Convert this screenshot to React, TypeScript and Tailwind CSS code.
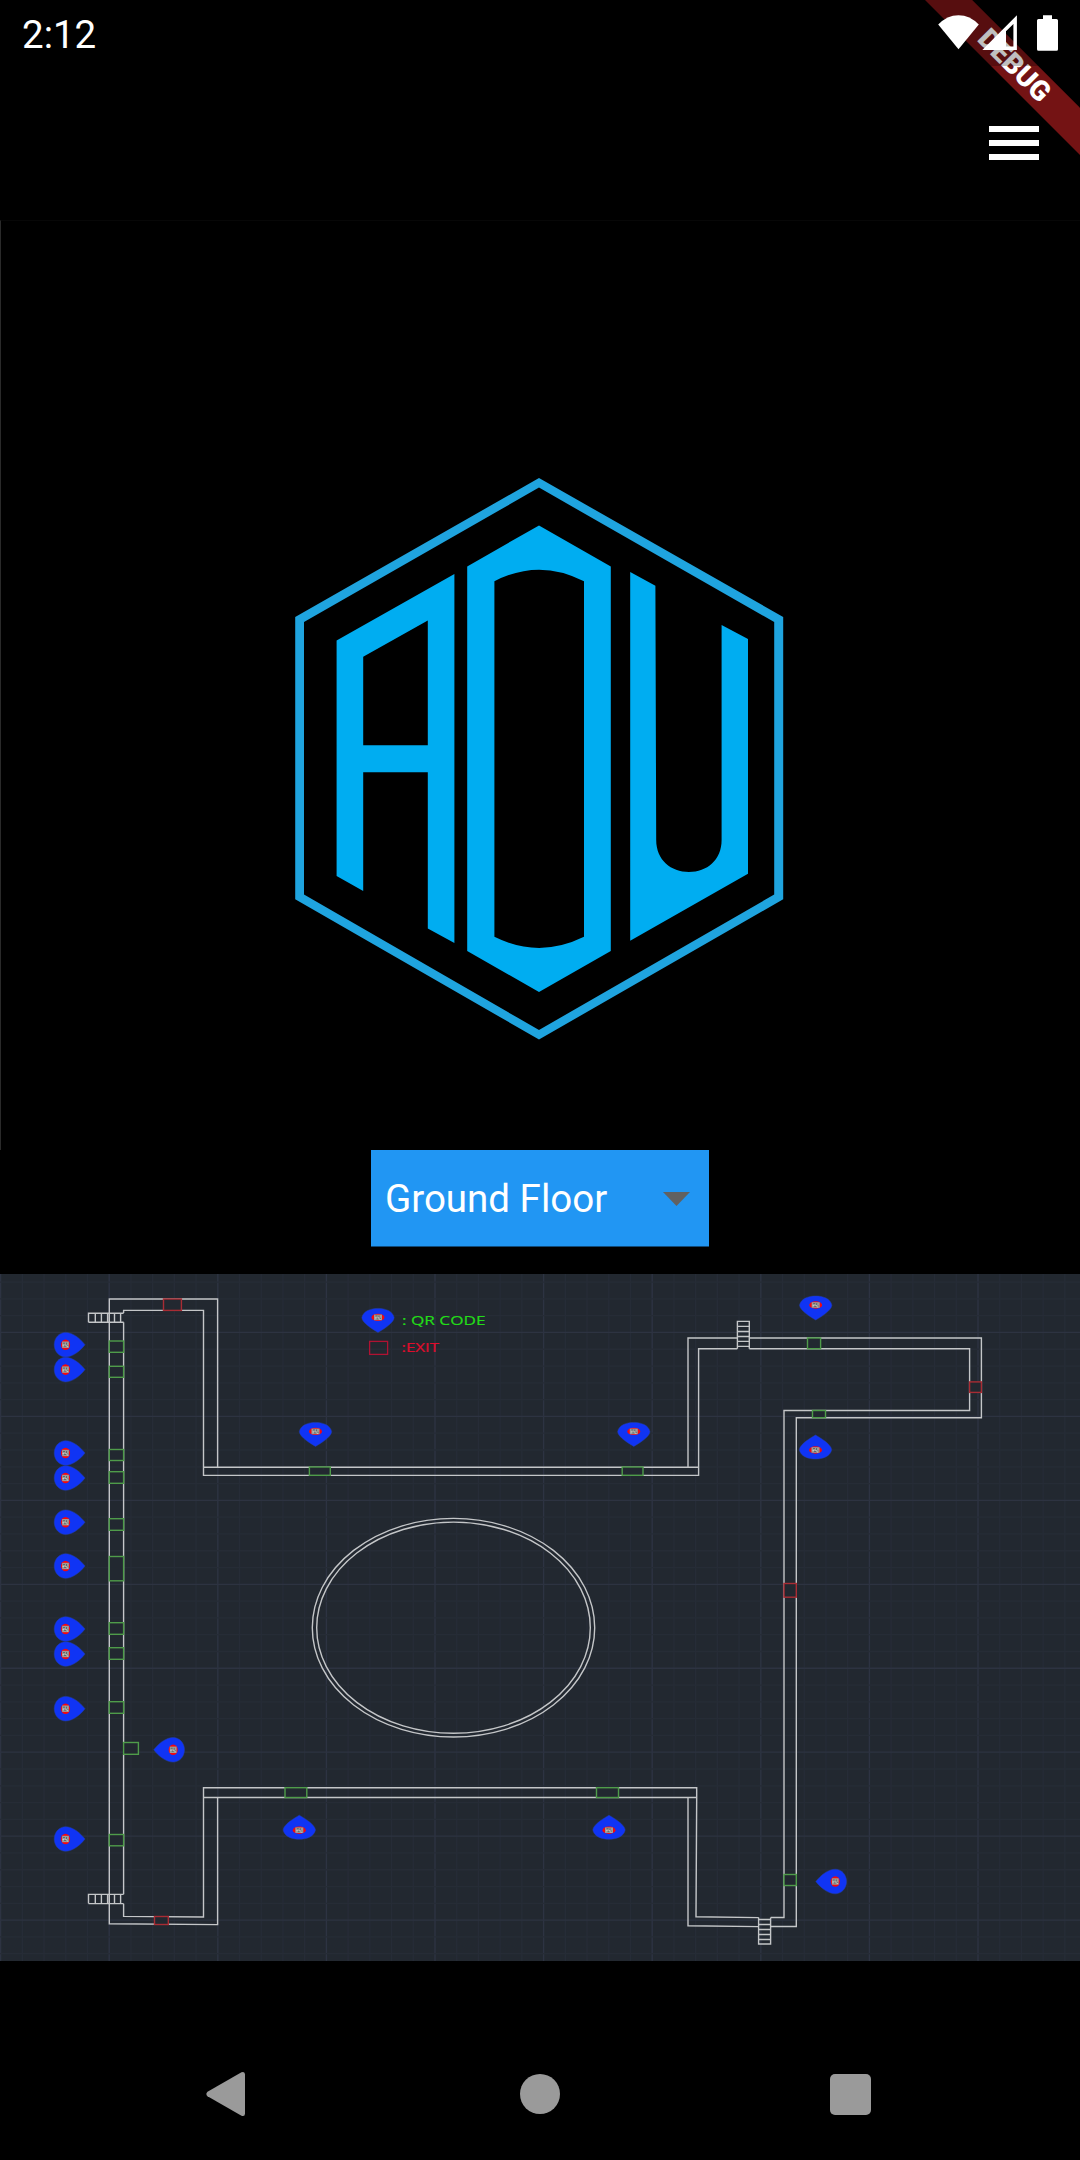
import React from "react";

type Direction = "up" | "down" | "left" | "right";
type Box = { x1: number; y1: number; x2: number; y2: number };

const LEFT = 109.3;
const INNER = 123.6;

const b = (x1: number, y1: number, x2: number, y2: number): Box => ({ x1, y1, x2, y2 });

const doors: Box[] = [
  b(LEFT, 1341, INNER, 1352.3),
  b(LEFT, 1366.3, INNER, 1377.3),
  b(LEFT, 1449.5, INNER, 1460.5),
  b(LEFT, 1471.7, INNER, 1483.3),
  b(LEFT, 1518.7, INNER, 1530.3),
  b(LEFT, 1556.5, INNER, 1580.8),
  b(LEFT, 1622.7, INNER, 1634.3),
  b(LEFT, 1647.7, INNER, 1659.3),
  b(LEFT, 1701.7, INNER, 1713.3),
  b(LEFT, 1834.5, INNER, 1845.8),
  b(INNER, 1742.5, 138.4, 1754.3),
  b(309.4, 1467, 330.3, 1475.3),
  b(622.2, 1467, 643, 1475.3),
  b(285, 1787.7, 306.8, 1797.5),
  b(596.5, 1787.7, 618.5, 1797.5),
  b(807.5, 1338, 820.6, 1348.7),
  b(812.5, 1410.5, 825.5, 1417.7),
  b(784, 1874.5, 796.3, 1885.5),
];

const exits: Box[] = [
  b(163.5, 1299, 181.4, 1310.4),
  b(154.5, 1916.5, 168.3, 1924.5),
  b(969.6, 1381.9, 981.4, 1392.4),
  b(784, 1583.5, 796.3, 1597.2),
];

const pins: { x: number; y: number; d: Direction }[] = [
  ...[1344.7, 1369.6, 1453, 1478, 1522.2, 1566, 1629, 1654, 1708.7, 1839].map((y) => ({
    x: 65.5,
    y,
    d: "right" as Direction,
  })),
  { x: 173.2, y: 1749.8, d: "left" },
  { x: 835.3, y: 1881.5, d: "left" },
  { x: 378, y: 1317.4, d: "down" },
  { x: 315.5, y: 1431.4, d: "down" },
  { x: 633.8, y: 1431.4, d: "down" },
  { x: 815.7, y: 1305, d: "down" },
  { x: 815.5, y: 1450, d: "up" },
  { x: 299.3, y: 1830.2, d: "up" },
  { x: 609, y: 1830.2, d: "up" },
];

const walls = [
  // north-west wing
  "M109.3 1313V1299H217.6V1467",
  "M123.6 1313V1310.4H203.5V1475.4H698.6V1348.7H737.3",
  "M203.5 1467.2H698.6M688 1467V1338H737.3",
  // west corridor
  "M109.3 1322.3V1894.3M123.6 1322.3V1742.5M123.6 1754.3V1894.3",
  // south-west wing
  "M109.3 1903.7V1923.8L217.6 1924.6V1797.5",
  "M123.6 1903.7V1916.4L203.5 1917V1787.7H696.7V1797.5L696 1916.8L758.7 1917.6",
  "M203.5 1797.5H696.7M688 1797.5V1925.8L758.7 1926.6",
  // south-east corner
  "M770.7 1926.5H796.3V1417.7H981.4V1338H749.3",
  "M770.7 1917.5H784V1410.5H969.6V1348.7H749.3",
];

const stairs = [
  "M88.5 1322.3V1313.2H123.6M88.5 1322.3H123.6M95.3 1313V1322M101.4 1313V1322M107.6 1313V1322M109.3 1313V1322M114.5 1313V1322M120.6 1313V1322",
  "M88.5 1903.6V1894.4H123.6M88.5 1903.6H123.6M95.3 1894V1904M101.4 1894V1904M107.6 1894V1904M109.3 1894V1904M114.5 1894V1904M120.6 1894V1904",
  "M737.4 1348.7V1321.4H749.3V1348.7M737.4 1326.4H749.3M737.4 1331.5H749.3M737.4 1336.5H749.3M737.4 1341.4H749.3M737.4 1346.4H749.3",
  "M758.6 1917.5V1944H770.6V1917.5M758.6 1919.5H770.6M758.6 1924.5H770.6M758.6 1929.5H770.6M758.6 1934.5H770.6M758.6 1939.5H770.6",
];

function Pin({ x, y, d }: { x: number; y: number; d: Direction }) {
  const horizontal = d === "left" || d === "right";
  const flip = d === "left" ? "scale(-1 1)" : d === "up" ? "scale(1 -1)" : "";
  return (
    <g transform={`translate(${x} ${y})`}>
      <path
        transform={flip}
        d={
          horizontal
            ? "M-11.3 0C-11.3 -7 -6 -12.3 0 -12.3C7 -12.3 14.5 -6.5 19.5 0C14.5 6.5 7 12.3 0 12.3C-6 12.3 -11.3 7 -11.3 0Z"
            : "M0 -9C7 -9 15 -6.5 16.2 0.3C15.5 6 5 12 0 15C-5 12 -15.5 6 -16.2 0.3C-15 -6.5 -7 -9 0 -9Z"
        }
        fill="#1034f4"
        stroke="#2440a8"
        strokeWidth="0.5"
      />
      <ellipse rx={horizontal ? 4.6 : 6.5} ry={horizontal ? 5.3 : 3.7} fill="#f5080c" />
      <rect
        x={horizontal ? -3.4 : -4}
        y={horizontal ? -3.2 : -2.8}
        width={horizontal ? 6.8 : 8}
        height={horizontal ? 6.4 : 5.6}
        fill="#9c9c9a"
      />
      <path d="M-2.5 -1.5H-0.5M1 -2V0M-1.5 1.5H0.5M2 1H3" stroke="#5c6c6c" strokeWidth="1" />
      <path d="M-3 0.5H-1.5M0 0.5H1M1.5 2H2.5" stroke="#c8c8c4" strokeWidth="1" />
    </g>
  );
}

function BoxRect({ box, color }: { box: Box; color: string }) {
  return (
    <rect
      x={box.x1}
      y={box.y1}
      width={box.x2 - box.x1}
      height={box.y2 - box.y1}
      fill="#222830"
      stroke={color}
      strokeWidth="1.4"
    />
  );
}

function FloorPlan() {
  const columns = Array.from({ length: 50 }, (_, i) => i);
  const rows = Array.from({ length: 41 }, (_, i) => i);
  return (
    <svg className="block h-[687px] w-full shrink-0" viewBox="0 1274 1080 687">
      <rect y="1274" width="1080" height="687" fill="#222830" />
      {columns.map((i) => (
        <path
          key={i}
          d={`M${0.6 + i * 21.72} 1274V1961`}
          stroke={i % 5 ? "#262c37" : "#2d3342"}
          strokeWidth="1.4"
        />
      ))}
      {rows.map((i) => (
        <path
          key={i}
          d={`M0 ${1282.1 + i * 16.79}H1080`}
          stroke={i % 5 === 3 ? "#2d3341" : "#262c36"}
          strokeWidth="1.3"
        />
      ))}
      <g fill="none" stroke="#c4c6c8" strokeWidth="1.4">
        {walls.map((d) => (
          <path key={d} d={d} />
        ))}
        {stairs.map((d) => (
          <path key={d} d={d} />
        ))}
        <ellipse cx="453.5" cy="1627.7" rx="141.2" ry="109.3" />
        <ellipse cx="453.5" cy="1627.7" rx="136.8" ry="105.6" />
      </g>
      {doors.map((box, i) => (
        <BoxRect key={i} box={box} color="#4f9c4a" />
      ))}
      {exits.map((box, i) => (
        <BoxRect key={i} box={box} color="#a82c34" />
      ))}
      {pins.map((pin, i) => (
        <Pin key={i} {...pin} />
      ))}
      <rect x="369.6" y="1341.4" width="18" height="13" fill="none" stroke="#b01232" strokeWidth="1.3" />
      <g className="font-['Open_Sans',sans-serif] text-[13.2px]">
        <text x="402" y="1324.5" textLength="83.5" lengthAdjust="spacingAndGlyphs" fill="#22dc18" stroke="#22dc18" strokeWidth="0.2">
          : QR CODE
        </text>
        <text x="401.5" y="1352" textLength="37.5" lengthAdjust="spacingAndGlyphs" fill="#e00c2c" stroke="#e00c2c" strokeWidth="0.2">
          :EXIT
        </text>
      </g>
    </svg>
  );
}

function Logo() {
  return (
    <svg className="h-[562px] w-[490px]" viewBox="294 478 490 562">
      <g fillRule="evenodd">
        <path
          fill="#1fa4df"
          d="M539 478L783.2 617V899.3L539 1039.5L295.2 899.3V617ZM539 487.6L304 622V894.5L539 1030L774.2 894.5V622Z"
        />
        <g fill="#00adf1">
          <path d="M336.6 640.6L454.4 574V943L427.8 928.4V772.3H363.2V891L336.6 876ZM363.2 656.7V745.2H427.8V620.4Z" />
          <path d="M539 525.4L610.8 566.4V951L539 992L467.2 951V566.4ZM494.4 581.3V936.8Q539 959 584 936.8V581.3Q539 558 494.4 581.3Z" />
          <path d="M630.2 572L655.4 585.7L656.2 840C656.2 860 671 872 689 872S721.6 860 721.6 840V625L748 639V873.7L630.2 940.7Z" />
        </g>
      </g>
    </svg>
  );
}

function DebugBanner() {
  return (
    <div className="pointer-events-none absolute top-0 right-0 h-[160px] w-[160px] overflow-hidden">
      <svg className="absolute inset-0" width="160" height="160" viewBox="920 0 160 160">
        <path d="M925 0H972.2L1080 107.8V155Z" fill="#741314" />
        <text
          transform="translate(1014.8 65) rotate(45)"
          textAnchor="middle"
          y="9.9"
          fill="#fff"
          className="font-['Roboto',sans-serif] text-[28px] font-black"
        >
          DEBUG
        </text>
      </svg>
      <div className="absolute inset-x-0 top-0 h-[66px] bg-black/25" />
    </div>
  );
}

function StatusBar() {
  return (
    <div className="relative flex h-[66px] shrink-0 items-start justify-between pl-[22px] font-['Roboto',sans-serif] text-white">
      <span className="pt-[12px] text-[38.5px] leading-[45px]">2:12</span>
      <svg className="h-[66px] w-[150px]" viewBox="930 0 150 66" fill="#fff">
        <path d="M958.5 49.3L938.2 24.6Q947 15.2 958.5 15.2T978.8 24.6Z" />
        <path
          fillRule="evenodd"
          d="M982.3 50L1016.9 15.3V50ZM1006 31.3V46.4H1013.4V24Z"
        />
        <path d="M1043 15.3H1052V19H1056.5Q1058 19 1058 20.5V49.3Q1058 50.8 1056.5 50.8H1038.5Q1037 50.8 1037 49.3V20.5Q1037 19 1038.5 19H1043Z" />
      </svg>
    </div>
  );
}

export default function App() {
  return (
    <main className="relative flex h-[2160px] w-[1080px] flex-col overflow-hidden bg-black">
      <DebugBanner />
      <StatusBar />
      <header className="flex h-[154px] shrink-0 items-center justify-end pr-[41px]">
        <button aria-label="Menu" className="flex w-[50px] flex-col gap-[8px]">
          <span className="h-[6px] bg-white" />
          <span className="h-[6px] bg-white" />
          <span className="h-[6px] bg-white" />
        </button>
      </header>
      <section className="flex h-[930px] shrink-0 flex-col items-start border-t border-l border-t-[#070707] border-l-[#2a2a2a] pt-[257px] pl-[293px]">
        <Logo />
      </section>
      <button className="ml-[371px] flex h-[97px] w-[338px] shrink-0 items-center justify-between border-b border-[#104a79] bg-[#2196f3] pt-[2px] pr-[19px] pl-[14px] font-['Roboto',sans-serif] text-[38.5px] leading-none text-white">
        <span>Ground Floor</span>
        <svg className="h-[14px] w-[27px]" viewBox="0 0 27 14">
          <path d="M0 0H27L13.5 14Z" fill="#616161" />
        </svg>
      </button>
      <div className="h-[27px] shrink-0" />
      <FloorPlan />
      <nav className="flex h-[199px] shrink-0 items-center justify-between pt-[67px] pr-[209px] pl-[206px]">
        <svg className="h-[46px] w-[40px]" viewBox="0 0 40 46">
          <path d="M1.5 20.7L35.5 1.2Q39 0 39 3.5V42.5Q39 46 35.5 44.8L1.5 25.3Q-0.8 23 1.5 20.7Z" fill="#9a9a9a" />
        </svg>
        <span className="ml-[4px] h-[40px] w-[40px] rounded-full bg-[#9a9a9a]" />
        <span className="h-[41px] w-[41px] rounded-[5px] bg-[#9a9a9a]" />
      </nav>
    </main>
  );
}
